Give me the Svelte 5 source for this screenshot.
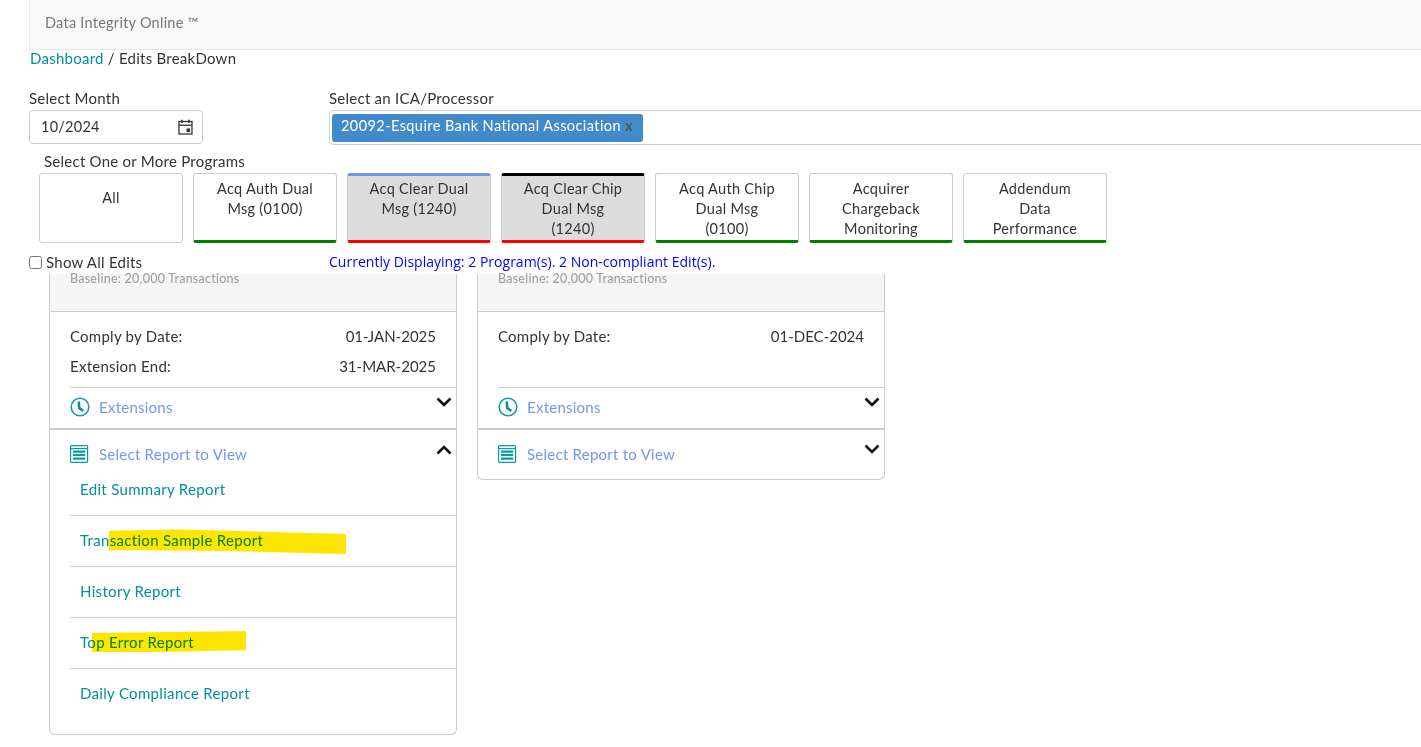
<script>
  const programs = [
    { name: 'All', cls: 'plain' },
    { name: 'Acq Auth Dual Msg (0100)', cls: 'ok' },
    { name: 'Acq Clear Dual Msg (1240)', cls: 'sel-blue' },
    { name: 'Acq Clear Chip Dual Msg (1240)', cls: 'sel-black' },
    { name: 'Acq Auth Chip Dual Msg (0100)', cls: 'ok' },
    { name: 'Acquirer Chargeback Monitoring', cls: 'ok' },
    { name: 'Addendum Data Performance', cls: 'ok' }
  ];
  const reports = ['Edit Summary Report', 'Transaction Sample Report', 'History Report', 'Top Error Report', 'Daily Compliance Report'];
</script>

{#snippet clock()}
  <svg class="ic" width="20" height="20" viewBox="0 0 20 20"><circle cx="10" cy="10" r="8.8" fill="none" stroke="#0a9ca5" stroke-width="1.5"/><path d="M8.8 4.5 L9.2 11 L13.4 14" fill="none" stroke="#0a8f98" stroke-width="2.6"/></svg>
{/snippet}
{#snippet list()}
  <svg class="ic" width="20" height="20" viewBox="0 0 20 20"><rect x=".6" y="1.6" width="17" height="16.8" rx="1" fill="none" stroke="#0a9ca5" stroke-width="1.2"/><path d="M.6 4.6 H17.6" stroke="#0a9ca5" stroke-width="1.2" fill="none"/><path d="M3 7.6 H15.2 M3 11 H15.2 M3 14.6 H15.2" stroke="#0a9ca5" stroke-width="2.2" fill="none"/></svg>
{/snippet}
{#snippet chev(up)}
  <svg class="chev" width="16" height="10" viewBox="0 0 16 10"><path d={up ? 'M1.5 8.5 L8 2 L14.5 8.5' : 'M1.5 1.5 L8 8 L14.5 1.5'} fill="none" stroke="#111" stroke-width="2.6"/></svg>
{/snippet}

<div class="page">
  <header class="nav">Data Integrity Online ™</header>
  <div class="crumb"><a href="#top">Dashboard</a> / Edits BreakDown</div>

  <div class="filters">
    <div class="month">
      <div class="label">Select Month</div>
      <div class="input">
        <span>10/2024</span>
        <svg width="15" height="16" viewBox="0 0 15 16"><rect x="1" y="2.5" width="13" height="12.5" fill="none" stroke="#333" stroke-width="1.3"/><path d="M1 6.2 H14" stroke="#333" stroke-width="1.3"/><path d="M4 .8 V4 M11 .8 V4" stroke="#333" stroke-width="1.5"/><rect x="8.5" y="9.5" width="3.6" height="3.6" fill="#333"/></svg>
      </div>
    </div>
    <div class="ica">
      <div class="label">Select an ICA/Processor</div>
      <div class="select"><span class="chip">20092-Esquire Bank National Association <b>x</b></span></div>
    </div>
  </div>

  <div class="programs-label">Select One or More Programs</div>
  <div class="programs">
    {#each programs as p}
      <button class="prog {p.cls}">{p.name}</button>
    {/each}
  </div>

  <div class="status">
    <label class="check"><input type="checkbox" /> Show All Edits</label>
    <div class="displaying">Currently Displaying: 2 Program(s). 2 Non-compliant Edit(s).</div>
  </div>

  <div class="cards">
    <section class="card">
      <div class="head">Baseline: 20,000 Transactions</div>
      <div class="dates">
        <div class="row"><span>Comply by Date:</span><span class="val">01-JAN-2025</span></div>
        <div class="row"><span>Extension End:</span><span class="val">31-MAR-2025</span></div>
      </div>
      <div class="acc ext">{@render clock()}<span>Extensions</span>{@render chev(false)}</div>
      <div class="acc rep">{@render list()}<span>Select Report to View</span>{@render chev(true)}</div>
      <ul>
        {#each reports as r, i}
          <li>
            <a href="#top">{r}</a>
            {#if i === 1}<i class="mark mark-a"></i>{/if}
            {#if i === 3}<i class="mark mark-b"></i>{/if}
          </li>
        {/each}
      </ul>
    </section>
    <section class="card">
      <div class="head">Baseline: 20,000 Transactions</div>
      <div class="dates">
        <div class="row"><span>Comply by Date:</span><span class="val">01-DEC-2024</span></div>
      </div>
      <div class="acc ext">{@render clock()}<span>Extensions</span>{@render chev(false)}</div>
      <div class="acc rep closed">{@render list()}<span>Select Report to View</span>{@render chev(false)}</div>
    </section>
  </div>
</div>

<style>
  :global(body) { margin: 0; background: #fff; overflow: hidden; }
  .page {
    height: 747px; overflow: hidden; box-sizing: border-box;
    font-family: Lato, "Noto Sans", sans-serif; font-size: 15px; color: #333;
    letter-spacing: .25px;
  }
  .nav {
    height: 50px; margin-left: 29px; margin-right: -8px; box-sizing: border-box;
    background: #f8f8f8; border: 1px solid #e7e7e7; border-top: 0;
    padding: 15px 15px 0; color: #777; line-height: 16px; font-size: 14.5px;
  }
  .crumb { margin: 0 0 0 30px; line-height: 16px; color: #333; }
  a { color: #00909e; text-decoration: none; }
  .filters { display: flex; margin: 24px 0 0 29px; }
  .month { width: 174px; margin-right: 126px; flex: none; }
  .ica { flex: 1; min-width: 0; margin-right: -8px; }
  .label { line-height: 16px; margin-bottom: 4px; }
  .input {
    height: 34px; box-sizing: border-box; border: 1px solid #ccd0d8; border-radius: 4px;
    display: flex; align-items: center; justify-content: space-between; padding: 0 9px 2px 11px;
    font-size: 14.5px;
  }
  .input svg { margin-top: 2px; }
  .select {
    height: 35px; box-sizing: border-box; border: 1px solid #ccd0d8; border-radius: 4px 0 0 4px;
    padding: 3px 2px;
  }
  .chip {
    display: inline-block; height: 28px; line-height: 23px; box-sizing: border-box; width: 311px;
    background: #428bca; color: #fff; border-radius: 3px; padding-left: 9px; white-space: nowrap;
    font-size: 14.5px; letter-spacing: .42px;
  }
  .chip b { color: #555; font-weight: 700; margin-left: 0; }
  .programs-label { margin: 8px 0 0 44px; line-height: 16px; }
  .programs { display: flex; gap: 10px; margin: 4px 0 0 39px; }
  .prog {
    width: 144px; height: 70px; box-sizing: border-box; padding: 5px 20px 0; margin: 0;
    font: inherit; font-size: 14.5px; letter-spacing: .3px; color: #333; line-height: 20px; text-align: center;
    background: #fff; border: 1px solid #ccc; border-radius: 3px;
    display: flex; justify-content: center; align-items: flex-start;
  }
  .prog.plain { padding-top: 14px; }
  .prog.ok { border-bottom: 3px solid #008000; }
  .prog.sel-blue, .prog.sel-black { background: #dcdcdc; border-bottom: 3px solid #f00; padding-top: 3px; }
  .prog.sel-blue { border-top: 3px solid #6f94f0; }
  .prog.sel-black { border-top: 3px solid #000; }
  .status { display: flex; margin: 9px 0 0 29px; height: 22px; line-height: 20px; }
  .check { width: 300px; flex: none; display: flex; align-items: center; gap: 4px; height: 20px; }
  .check input { margin: 0; width: 13px; height: 13px; }
  .displaying { color: #00f; font-family: "Open Sans", sans-serif; font-size: 14px; letter-spacing: .02px; }
  .cards { display: flex; align-items: flex-start; gap: 20px; margin-left: 49px; }
  .card {
    width: 408px; box-sizing: border-box; border: 1px solid #ccc; border-top: 0;
    border-radius: 0 0 6px 6px;
  }
  .head {
    height: 38px; box-sizing: border-box; background: #f5f5f5; border-bottom: 1px solid #ccc;
    padding-left: 20px; font-size: 12.5px; line-height: 10px; color: #999;
  }
  .dates { height: 76px; margin-left: 20px; padding-top: 9px; box-sizing: border-box; border-bottom: 1px solid #ccc; }
  .row { display: flex; justify-content: space-between; height: 30px; line-height: 30px; padding-right: 20px; margin: 0; }
  .val { letter-spacing: 0; }
  .acc { display: flex; position: relative; align-items: center; color: #7596f5; padding-left: 20px; }
  .acc .ic { margin-right: 9px; flex: none; }
  .acc .chev { position: absolute; right: 4px; }
  .ext { height: 38px; padding-bottom: 2px; border-bottom: 2px solid #ccc; }
  .ext .chev { top: 9px; }
  .rep { height: 48px; }
  .rep .chev { top: 15px; }
  .rep.closed { height: 47px; padding-bottom: 2px; }
  .rep.closed .chev { top: 14px; }
  ul { list-style: none; margin: 0 0 15px 20px; padding: 0; }
  li { position: relative; height: 51px; border-top: 1px solid #ccc; box-sizing: border-box; padding: 14px 0 0 10px; line-height: 20px; letter-spacing: .32px; }
  li:first-child { border-top: 0; height: 37px; padding-top: 1px; }
  .mark { position: absolute; background: #ffe600; mix-blend-mode: multiply; }
  .mark-a { left: 39px; top: 13px; width: 237px; height: 25px; clip-path: polygon(0 7%, 30% 2%, 100% 20%, 100% 100%, 50% 88%, 3% 84%, 0 86%); }
  .mark-b { left: 22px; top: 13px; width: 154px; height: 21px; clip-path: polygon(0 10%, 100% 0, 100% 92%, 40% 100%, 0 100%); }
</style>
